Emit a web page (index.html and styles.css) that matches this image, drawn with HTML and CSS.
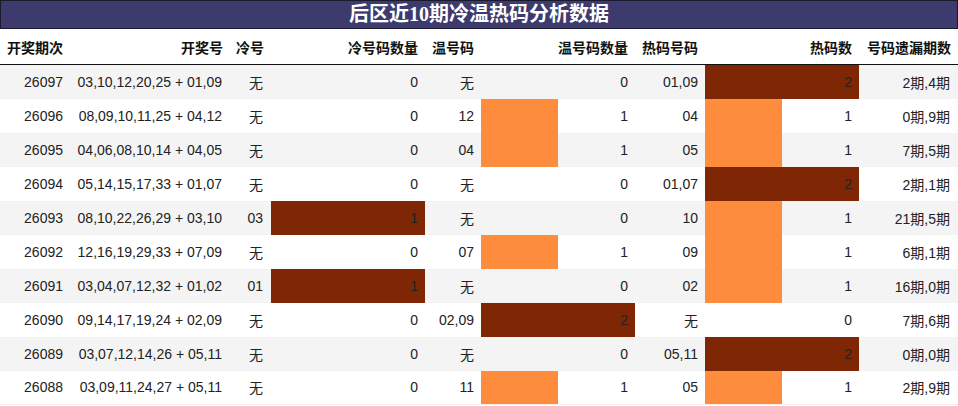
FILE: index.html
```html
<!DOCTYPE html>
<html lang="zh">
<head>
<meta charset="utf-8">
<link rel="stylesheet" href="styles.css">
</head>
<body>
<div class="title">后区近10期冷温热码分析数据</div>
<table class="grid">
<colgroup>
<col class="c1"><col class="c2"><col class="c3"><col class="c4"><col class="c5"><col class="c6"><col class="c7"><col class="c8"><col class="c9">
</colgroup>
<thead>
<tr><th>开奖期次</th><th>开奖号</th><th>冷号</th><th>冷号码数量</th><th>温号码</th><th>温号码数量</th><th>热码号码</th><th>热码数</th><th>号码遗漏期数</th></tr>
</thead>
<tbody>
<tr><td>26097</td><td>03,10,12,20,25 + 01,09</td><td class="cjk">无</td><td>0</td><td class="cjk">无</td><td>0</td><td>01,09</td><td class="bar dark" style="--w:100%">2</td><td class="cjk">2期,4期</td></tr>
<tr><td>26096</td><td>08,09,10,11,25 + 04,12</td><td class="cjk">无</td><td>0</td><td>12</td><td class="bar light" style="--w:50%">1</td><td>04</td><td class="bar light" style="--w:50%">1</td><td class="cjk">0期,9期</td></tr>
<tr><td>26095</td><td>04,06,08,10,14 + 04,05</td><td class="cjk">无</td><td>0</td><td>04</td><td class="bar light" style="--w:50%">1</td><td>05</td><td class="bar light" style="--w:50%">1</td><td class="cjk">7期,5期</td></tr>
<tr><td>26094</td><td>05,14,15,17,33 + 01,07</td><td class="cjk">无</td><td>0</td><td class="cjk">无</td><td>0</td><td>01,07</td><td class="bar dark" style="--w:100%">2</td><td class="cjk">2期,1期</td></tr>
<tr><td>26093</td><td>08,10,22,26,29 + 03,10</td><td>03</td><td class="bar dark" style="--w:100%">1</td><td class="cjk">无</td><td>0</td><td>10</td><td class="bar light" style="--w:50%">1</td><td class="cjk">21期,5期</td></tr>
<tr><td>26092</td><td>12,16,19,29,33 + 07,09</td><td class="cjk">无</td><td>0</td><td>07</td><td class="bar light" style="--w:50%">1</td><td>09</td><td class="bar light" style="--w:50%">1</td><td class="cjk">6期,1期</td></tr>
<tr><td>26091</td><td>03,04,07,12,32 + 01,02</td><td>01</td><td class="bar dark" style="--w:100%">1</td><td class="cjk">无</td><td>0</td><td>02</td><td class="bar light" style="--w:50%">1</td><td class="cjk">16期,0期</td></tr>
<tr><td>26090</td><td>09,14,17,19,24 + 02,09</td><td class="cjk">无</td><td>0</td><td>02,09</td><td class="bar dark" style="--w:100%">2</td><td class="cjk">无</td><td>0</td><td class="cjk">7期,6期</td></tr>
<tr><td>26089</td><td>03,07,12,14,26 + 05,11</td><td class="cjk">无</td><td>0</td><td class="cjk">无</td><td>0</td><td>05,11</td><td class="bar dark" style="--w:100%">2</td><td class="cjk">0期,0期</td></tr>
<tr><td>26088</td><td>03,09,11,24,27 + 05,11</td><td class="cjk">无</td><td>0</td><td>11</td><td class="bar light" style="--w:50%">1</td><td>05</td><td class="bar light" style="--w:50%">1</td><td class="cjk">2期,9期</td></tr>
</tbody>
</table>
</body>
</html>
```
FILE: styles.css
```css
html, body {
  margin: 0;
  padding: 0;
  background: #fff;
}
body {
  width: 958px;
  font-family: "Liberation Sans", "Noto Sans CJK SC", sans-serif;
  color: #222;
}
.title {
  box-sizing: border-box;
  height: 29px;
  background: #3d3b6e;
  border: 1px solid #1a1a2a;
  color: #fff;
  font-family: "Liberation Serif", "Noto Sans CJK SC", serif;
  font-weight: bold;
  font-size: 20px;
  line-height: 26px;
  text-align: center;
}
.grid {
  width: 958px;
  border-collapse: collapse;
  table-layout: fixed;
}
.c1 { width: 71px; }
.c2 { width: 159px; }
.c3 { width: 41px; }
.c4 { width: 154px; }
.c5 { width: 56px; }
.c6 { width: 154px; }
.c7 { width: 70px; }
.c8 { width: 154px; }
.c9 { width: 99px; }
th {
  height: 35px;
  padding: 0 7px 0 0;
  border-bottom: 1px solid #111;
  text-align: right;
  font-family: "Noto Sans CJK SC", sans-serif;
  font-weight: bold;
  font-size: 14px;
  color: #111;
  white-space: nowrap;
}
th:first-child { padding-right: 8px; }
td {
  height: 34px;
  padding: 0 7px 0 0;
  text-align: right;
  font-size: 14px;
  white-space: nowrap;
  box-sizing: border-box;
}
td:first-child, td:nth-child(2), td:nth-child(3), td:last-child { padding-right: 8px; }
tbody tr:nth-child(odd) { background: #f4f4f4; }
tbody tr:last-child td { border-bottom: 1px solid #eee; }
.cjk { font-family: "Liberation Sans", "Noto Sans CJK SC", sans-serif; }
.bar {
  background-repeat: no-repeat;
  background-position: left top;
  background-size: var(--w) 100%;
}
.bar.dark { background-image: linear-gradient(#7f2704, #7f2704); }
.bar.light { background-image: linear-gradient(#fd8d3c, #fd8d3c); }
```
